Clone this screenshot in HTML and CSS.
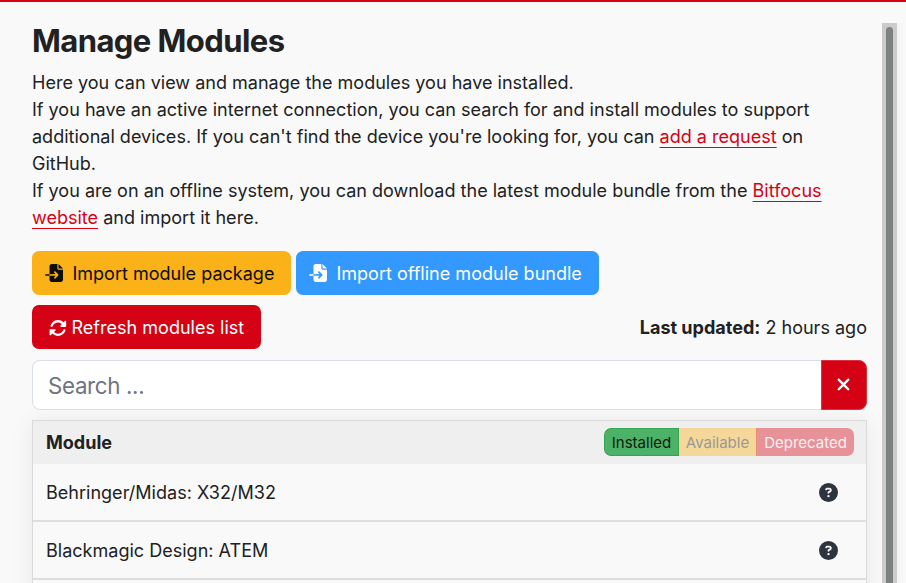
FILE: index.html
```html
<!DOCTYPE html>
<html lang="en">
<head>
<meta charset="utf-8">
<title>Manage Modules</title>
<link rel="stylesheet" href="styles.css">
</head>
<body>
<svg class="sprite" aria-hidden="true">
  <symbol id="import" viewBox="0 0 512 512"><path d="M128 64c0-35.300 28.700-64 64-64L352 0l0 128c0 17.700 14.300 32 32 32l128 0 0 288c0 35.300-28.700 64-64 64l-256 0c-35.300 0-64-28.700-64-64l0-112 174.100 0-39 39c-9.400 9.400-9.400 24.600 0 33.900s24.600 9.400 33.900 0l80-80c9.400-9.400 9.400-24.600 0-33.900l-80-80c-9.400-9.400-24.600-9.400-33.900 0s-9.400 24.600 0 33.900l39 39L128 288l0-224zm0 224l0 48L24 336c-13.300 0-24-10.700-24-24s10.700-24 24-24l104 0zM512 128l-128 0L384 0 512 128z"/></symbol>
  <symbol id="sync" viewBox="0 0 512 512"><path d="M142.900 142.900c62.200-62.200 162.700-62.500 225.300-1L327 183c-6.900 6.900-8.900 17.200-5.200 26.200s12.500 14.800 22.200 14.800l120 0c13.300 0 24-10.700 24-24l0-128c0-9.700-5.800-18.500-14.800-22.200s-19.300-1.700-26.200 5.200L413.400 96.600c-87.600-86.500-228.700-86.200-315.800 1C73.200 122 55.600 150.700 44.800 181.400c-5.900 16.700 2.900 34.900 19.500 40.800s34.900-2.900 40.800-19.500c7.700-21.800 20.200-42.300 37.800-59.800zM16 312L16 440c0 9.700 5.800 18.500 14.800 22.200s19.300 1.700 26.200-5.200l41.600-41.600c87.600 86.500 228.700 86.200 315.800-1c24.400-24.400 42.100-53.100 52.900-83.700c5.900-16.700-2.900-34.900-19.500-40.800s-34.900 2.900-40.800 19.500c-7.700 21.800-20.200 42.300-37.800 59.800c-62.200 62.200-162.700 62.500-225.300 1L185 329c6.900-6.900 8.900-17.200 5.200-26.200s-12.500-14.800-22.200-14.800L40 288c-13.300 0-24 10.700-24 24z"/></symbol>
  <symbol id="help" viewBox="0 0 512 512"><path d="M256 512A256 256 0 1 0 256 0a256 256 0 1 0 0 512zM169.800 165.300c7.900-22.300 29.100-37.300 52.800-37.300l58.300 0c34.900 0 63.100 28.300 63.100 63.100c0 22.600-12.100 43.500-31.700 54.800L280 264.400c-.2 13-10.900 23.600-24 23.600c-13.300 0-24-10.700-24-24l0-13.500c0-8.600 4.600-16.500 12.100-20.800l44.300-25.400c4.700-2.700 7.600-7.700 7.600-13.100c0-8.400-6.800-15.100-15.100-15.100l-58.300 0c-3.400 0-6.400 2.100-7.500 5.300l-.4 1.200c-4.400 12.500-18.200 19-30.600 14.600s-19-18.200-14.600-30.600l.4-1.200zM224 352a32 32 0 1 1 64 0 32 32 0 1 1-64 0z"/></symbol>
  <symbol id="clear" viewBox="0 0 384 512"><path d="M342.600 150.600c12.500-12.500 12.500-32.800 0-45.300s-32.800-12.500-45.300 0L192 210.700 86.600 105.400c-12.500-12.500-32.800-12.500-45.300 0s-12.500 32.800 0 45.300L146.700 256 41.400 361.400c-12.500 12.500-12.500 32.800 0 45.300s32.800 12.500 45.300 0L192 301.300 297.400 406.600c12.500 12.500 32.800 12.500 45.300 0s12.500-32.800 0-45.300L237.300 256 342.600 150.600z"/></symbol>
</svg>
<div class="page">
  <main class="content">
    <h1>Manage Modules</h1>
    <p class="intro">Here you can view and manage the modules you have installed.<br>
      If you have an active internet connection, you can search for and install modules to support<br>
      additional devices. If you can't find the device you're looking for, you can <a>add a request</a> on<br>
      GitHub.<br>
      If you are on an offline system, you can download the latest module bundle from the <a>Bitfocus</a><br>
      <a>website</a> and import it here.</p>
    <div class="buttons">
      <button class="btn warning"><svg><use href="#import"/></svg>Import module package</button>
      <button class="btn info"><svg><use href="#import"/></svg>Import offline module bundle</button>
    </div>
    <div class="refresh-row">
      <button class="btn primary"><svg><use href="#sync"/></svg>Refresh modules list</button>
      <div class="updated"><b>Last updated:</b> 2 hours ago</div>
    </div>
    <div class="search">
      <input type="text" placeholder="Search ...">
      <button class="clear" aria-label="Clear"><svg><use href="#clear"/></svg></button>
    </div>
    <div class="table">
      <div class="thead">
        <b>Module</b>
        <div class="filters"><span class="installed">Installed</span><span class="available">Available</span><span class="deprecated">Deprecated</span></div>
      </div>
      <div class="row">Behringer/Midas: X32/M32<svg><use href="#help"/></svg></div>
      <div class="row">Blackmagic Design: ATEM<svg><use href="#help"/></svg></div>
      <div class="row"></div>
    </div>
  </main>
  <div class="track"><div class="thumb"></div></div>
  <div class="edge"></div>
</div>
</body>
</html>
```
FILE: styles.css
```css
* { box-sizing: border-box; }
html, body { height: 100%; overflow: hidden; }
body {
  margin: 0;
  background: #f9f9f9;
  color: #212121;
  font: 18.04px/27px Inter, "Liberation Sans", sans-serif;
  white-space: nowrap;
}
svg { fill: currentColor; flex: none; }
.sprite { display: none; }
button, input { font: inherit; margin: 0; }
.page {
  height: 583px;
  border-top: 2px solid #d50215;
  display: flex;
  overflow: hidden;
}
.content { width: 835px; margin-left: 32px; flex: none; }
h1 { margin: 20px 0 9.4px; font-size: 31px; line-height: 38px; font-weight: 700; letter-spacing: -.58px; }
.intro { margin: 0 0 19.6px; height: 162px; line-height: 27px; }
a { color: #d50215; text-decoration: underline; text-decoration-thickness: 1.3px; text-underline-offset: 4px; text-decoration-skip-ink: none; }
.btn {
  height: 44px;
  border: 0;
  border-radius: 7px;
  display: flex;
  align-items: center;
  padding: 1px 16.500px 0;
  color: #fff;
}
.btn svg { width: 18px; height: 18px; }
.buttons { display: flex; gap: 5px; margin-bottom: 10.500px; }
.warning { background: #fab218; color: #0c0c08; width: 259px; padding: 1px 0 0 13px; }
.info { background: #3399ff; width: 303px; padding: 1px 0 0 13px; }
.buttons svg { margin-right: 9.400px; }
.refresh-row { display: flex; justify-content: space-between; align-items: center; margin-bottom: 10.500px; }
.primary { background: #d50215; width: 229px; }
.primary svg { margin-right: 5px; }
.search { display: flex; height: 50px; margin-bottom: 10px; }
.search input {
  flex: 1;
  min-width: 0;
  background: #fff;
  border: 1px solid #dbdfe6;
  border-right: 0;
  border-radius: 8px 0 0 8px;
  padding: 1px 15px 0;
  font-size: 22.300px;
  letter-spacing: -.32px;
  outline: 0;
}
.search input::placeholder { color: #6d7380; opacity: 1; }
.clear {
  width: 46px;
  background: #d50215;
  border: 1px solid #dd3040;
  border-radius: 0 8px 8px 0;
  color: #fff;
  padding: 0 1px 0 0;
  display: flex;
  align-items: center;
  justify-content: center;
}
.clear svg { width: 15px; height: 19px; }
.table { border: 1px solid #dadada; box-shadow: 0 2px 22px rgba(0, 0, 0, .07); background: #f9f9f9; }
.thead { height: 43px; background: #efefef; padding: 0 12px 0 13px; display: flex; align-items: center; justify-content: space-between; }
.filters { display: flex; height: 28px; border-radius: 7px; overflow: hidden; font-size: 15px; line-height: 29px; text-align: center; }
.installed { width: 75px; background: #4bb268; box-shadow: inset 0 0 0 1px #35a553; border-radius: 7px 0 0 7px; color: #0d1a10; }
.available { width: 77px; background: #f5d899; color: #999895; }
.deprecated { width: 98px; background: #e69298; color: #faf0f1; border-left: 1px solid #e98f70; }
.row { height: 58px; border-bottom: 2px solid #dedede; padding: 1px 28px 0 13px; display: flex; align-items: center; justify-content: space-between; }
.row svg { width: 19px; height: 19px; color: #2c343f; }
.track { width: 15px; margin: 21px 0 0 15px; background: #cbcbcb; padding: 4px 4px 0; flex: none; }
.thumb { width: 7px; height: 600px; border-radius: 4px 4px 0 0; background: #7d8180; }
.edge { flex: 1; background: linear-gradient(90deg, #f4f4f4, #f9f9f9); margin-top: 21px; }
```
